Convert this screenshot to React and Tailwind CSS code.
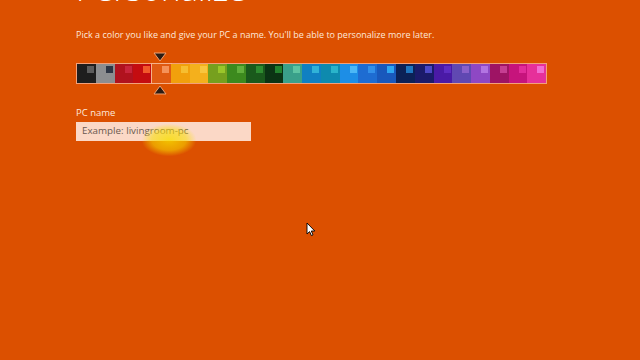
const swatches = [
  ['#1e1e1e', '#5c5c5c'],
  ['#8c8e90', '#2e3644'],
  ['#b0121e', '#c8253c'],
  ['#c40c10', '#f2582a'],
  ['#e05a12', '#f5925a'],
  ['#f1a00c', '#f6be30'],
  ['#f4b01c', '#f8c63e'],
  ['#76a01e', '#9ac62a'],
  ['#3c8a1e', '#62b03c'],
  ['#1a5a1c', '#2f8c30'],
  ['#0b3414', '#22822e'],
  ['#3aa08a', '#5ec4a2'],
  ['#1080c2', '#30b2d8'],
  ['#0e8aae', '#2ab4ca'],
  ['#1d8ee6', '#4cb8f6'],
  ['#1e6cd2', '#3290ea'],
  ['#1958bc', '#2ea6f2'],
  ['#0c2156', '#1f76be'],
  ['#1b1b6a', '#4c48c6'],
  ['#4a1aa6', '#5e2cc2'],
  ['#6048b2', '#8a60ca'],
  ['#8e48c4', '#b274e2'],
  ['#9e1464', '#c63e92'],
  ['#c6147c', '#e22c9a'],
  ['#e6309a', '#f26cd2'],
];

function Marker({ up }) {
  return (
    <svg width="14" height="10" viewBox="0 0 14 10">
      <path
        d={up ? 'M7 1 L13 9 L1 9 Z' : 'M1 1 L13 1 L7 9 Z'}
        fill="#2a1c14"
        stroke="#f0a070"
        strokeWidth="1"
      />
    </svg>
  );
}

export default function App() {
  return (
    <div
      className="relative w-[640px] h-[360px] overflow-hidden bg-[#dc5000] pl-[76px] text-white"
      style={{ fontFamily: '"Open Sans", "Noto Sans", sans-serif' }}
    >
      <h1 className="mt-[-31px] text-[33px] leading-[40px] font-light text-white">Personalize</h1>

      <p className="mt-[20px] text-[9px] leading-[12px] text-[#fde8dc]">
        Pick a color you like and give your PC a name. You'll be able to personalize more later.
      </p>

      <div className="mt-[11px] flex h-[10px] pl-[77px]">
        <Marker />
      </div>

      <div className="mt-[1px] flex h-[21px] w-[471px] border border-[#f2a07a]">
        {swatches.map(([bg, sq], i) => (
          <div
            key={i}
            className={`flex-1 pl-[10px] pt-[2px] ${i === 4 ? 'outline outline-1 outline-[#f6b08a]' : ''}`}
            style={{ backgroundColor: bg }}
          >
            <div className="h-[7px] w-[7px]" style={{ backgroundColor: sq }} />
          </div>
        ))}
      </div>

      <div className="mt-[1px] flex h-[10px] pl-[77px]">
        <Marker up />
      </div>

      <div className="mt-[12px] text-[9.5px] leading-[12px] text-[#fde8dc]">PC name</div>

      <div className="mt-[3px] flex h-[19px] w-[175px] items-center bg-[#fbd8c6] px-[6px]">
        <span className="text-[9.8px] text-[#6b5a50]">Example: livingroom-pc</span>
      </div>

      <div className="pointer-events-none absolute left-[142px] top-[124px] h-[32px] w-[54px] rounded-full bg-[radial-gradient(ellipse,rgba(248,222,0,0.8)_0%,rgba(248,222,0,0.55)_45%,rgba(248,222,0,0)_72%)]" />

      <svg className="absolute left-[306px] top-[222px]" width="10" height="15" viewBox="0 0 10 15">
        <path d="M1 1 L1 12 L3.6 9.6 L5.4 13.6 L7 12.9 L5.3 9 L8.8 9 Z" fill="#ffffff" stroke="#000000" strokeWidth="0.9" strokeLinejoin="round" />
      </svg>
    </div>
  );
}
